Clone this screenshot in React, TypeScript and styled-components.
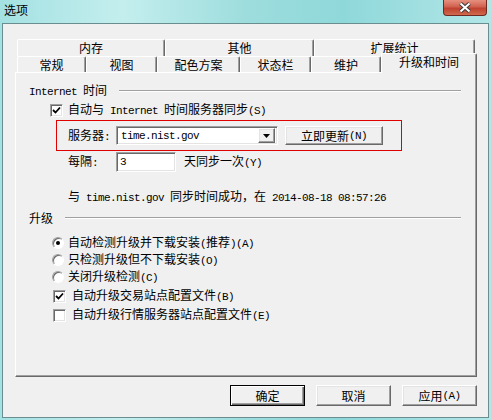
import React from "react";
import styled, { createGlobalStyle, css } from "styled-components";

const GlobalStyle = createGlobalStyle`
  html, body { margin: 0; padding: 0; background: #9fdcdc; }
  body {
    font-family: "Noto Sans CJK SC", "Liberation Sans", sans-serif;
    font-size: 12px;
    line-height: 14px;
    color: #000;
  }
  * { box-sizing: border-box; }
`;

const raised = css`
  border-top: 1px solid #fff;
  border-left: 1px solid #fff;
  border-right: 1px solid #696969;
  border-bottom: 1px solid #696969;
  box-shadow: inset -1px -1px #a0a0a0, inset 1px 1px #e3e3e3;
  background: #f0f0f0;
`;

const sunken = css`
  border-top: 1px solid #a0a0a0;
  border-left: 1px solid #a0a0a0;
  border-right: 1px solid #fff;
  border-bottom: 1px solid #fff;
  box-shadow: inset 1px 1px #696969, inset -1px -1px #e3e3e3;
  background: #fff;
`;

const Window = styled.div`
  width: 491px;
  height: 420px;
  display: flex;
  flex-direction: column;
  padding: 0 2px 2px;
  background: linear-gradient(
    90deg,
    #a4e1e2 0%,
    #c4eeee 25%,
    #9edddd 50%,
    #8fd8da 70%,
    #b2e6e7 100%
  );
`;

const TitleBar = styled.div`
  height: 23px;
  flex: none;
  display: flex;
  justify-content: space-between;
  align-items: flex-start;
  padding-left: 2px;
`;

const Title = styled.span`
  margin-top: 3px;
  color: #000;
`;

const CloseButton = styled.div`
  width: 44px;
  height: 16px;
  margin-right: 2px;
  display: flex;
  align-items: center;
  justify-content: center;
  border: 1px solid #6e2a22;
  border-top: none;
  border-radius: 0 0 4px 4px;
  background: linear-gradient(180deg, #e6907f 0%, #d2614f 45%, #c0412f 55%, #cf6a4e 100%);
`;

const Client = styled.div`
  flex: 1;
  display: flex;
  flex-direction: column;
  background: #f0f0f0;
  border: 1px solid #6a8d90;
  padding: 15px 11px 0 12px;
`;

const TabStrip = styled.div`
  height: 33px;
  flex: none;
  display: flex;
  flex-direction: column;
`;

const TabRow = styled.div<{ $h: number }>`
  height: ${(p) => p.$h}px;
  display: flex;
  align-items: flex-end;
  padding-left: 2px;
`;

const Tab = styled.div<{ $w: number; $h: number; $active?: boolean }>`
  width: ${(p) => p.$w}px;
  height: ${(p) => p.$h}px;
  flex: none;
  display: flex;
  align-items: ${(p) => (p.$active ? "flex-start" : "center")};
  padding-top: ${(p) => (p.$active ? 1 : 0)}px;
  justify-content: center;
  border-top: 1px solid #fff;
  border-left: 1px solid #fff;
  border-right: 1px solid #696969;
  box-shadow: inset -1px 0 #a0a0a0;
  border-radius: 2px 2px 0 0;
  background: #f0f0f0;
  ${(p) =>
    p.$active &&
    css`
      position: relative;
      z-index: 1;
      margin-bottom: -1px;
    `}
`;

const Panel = styled.div`
  height: 305px;
  flex: none;
  display: flex;
  flex-direction: column;
  border-top: 1px solid #fff;
  border-left: 1px solid #fff;
  border-right: 1px solid #696969;
  border-bottom: 1px solid #696969;
  box-shadow: inset -1px -1px #a0a0a0;
  padding: 11px 15px 0 13px;
`;

const GroupHeader = styled.div<{ $mt?: number }>`
  height: 14px;
  margin-top: ${(p) => p.$mt ?? 0}px;
  display: flex;
  align-items: center;
  gap: 12px;
`;

const Etched = styled.div`
  flex: 1;
  height: 2px;
  border-top: 1px solid #a0a0a0;
  border-bottom: 1px solid #fff;
`;

const Row = styled.div<{ $h: number; $mt?: number; $indent: number; $gap?: number }>`
  height: ${(p) => p.$h}px;
  margin-top: ${(p) => p.$mt ?? 0}px;
  padding-left: ${(p) => p.$indent}px;
  display: flex;
  align-items: center;
  gap: ${(p) => p.$gap ?? 0}px;
  white-space: nowrap;
`;

const ServerBox = styled.div`
  width: 346px;
  height: 31px;
  margin: 2px 0 0 27px;
  border: 1px solid #e00000;
  padding-left: 11px;
  display: flex;
  align-items: center;
`;

const FieldLabel = styled.span`
  width: 48px;
  flex: none;
`;

const En = styled.span`
  font-family: "Liberation Mono", monospace;
  font-size: 11px;
  letter-spacing: -0.6px;
  white-space: pre;
`;

const Combo = styled.div`
  width: 162px;
  height: 19px;
  ${sunken}
  display: flex;
  align-items: center;
  justify-content: space-between;
  padding: 2px 2px 2px 4px;
`;

const DropButton = styled.div`
  width: 17px;
  height: 15px;
  ${raised}
  display: flex;
  align-items: center;
  justify-content: center;
`;

const Edit = styled.div`
  width: 60px;
  height: 20px;
  ${sunken}
  display: flex;
  align-items: center;
  padding-left: 3px;
`;

const PushButton = styled.div<{ $w: number; $h: number; $default?: boolean }>`
  width: ${(p) => p.$w}px;
  height: ${(p) => p.$h}px;
  flex: none;
  ${raised}
  display: flex;
  align-items: center;
  justify-content: center;
  ${(p) =>
    p.$default &&
    css`
      border: 1px solid #000;
      box-shadow: inset 1px 1px #fff, inset -1px -1px #696969, inset -2px -2px #a0a0a0;
    `}
`;

const BoxMark = styled.div`
  width: 13px;
  height: 13px;
  flex: none;
  ${sunken}
  display: flex;
  align-items: center;
  justify-content: center;
`;

const RadioMark = styled.div<{ $on?: boolean }>`
  width: 12px;
  height: 12px;
  flex: none;
  border-radius: 50%;
  border: 1px solid;
  border-color: #a0a0a0 #fff #fff #a0a0a0;
  box-shadow: inset 1px 1px #696969;
  background: #fff;
  display: flex;
  align-items: center;
  justify-content: center;
  &::after {
    content: "";
    width: 4px;
    height: 4px;
    border-radius: 50%;
    background: ${(p) => (p.$on ? "#000" : "transparent")};
  }
`;

const ButtonBar = styled.div`
  margin-top: 8px;
  display: flex;
  justify-content: flex-end;
  gap: 11px;
`;

const Check = ({ on }: { on?: boolean }) => (
  <BoxMark>
    {on && (
      <svg width="9" height="9" viewBox="0 0 9 9">
        <path d="M1 4 L3.5 6.5 L8 1.5" fill="none" stroke="#000" strokeWidth="1.8" />
      </svg>
    )}
  </BoxMark>
);

const backTabs = [
  { label: "内存", w: 148 },
  { label: "其他", w: 149 },
  { label: "扩展统计", w: 161 },
];

const frontTabs = [
  { label: "常规", w: 69 },
  { label: "视图", w: 71 },
  { label: "配色方案", w: 83 },
  { label: "状态栏", w: 71 },
  { label: "维护", w: 70 },
  { label: "升级和时间", w: 96, active: true },
];

export default function App() {
  return (
    <>
      <GlobalStyle />
      <Window>
        <TitleBar>
          <Title>选项</Title>
          <CloseButton>
            <svg width="14" height="11" viewBox="0 0 14 11">
              <path d="M2.5 1.5 L11.5 9.5 M11.5 1.5 L2.5 9.5" stroke="#3a3a3a" strokeWidth="4" />
              <path d="M2.5 1.5 L11.5 9.5 M11.5 1.5 L2.5 9.5" stroke="#fff" strokeWidth="2" />
            </svg>
          </CloseButton>
        </TitleBar>

        <Client>
          <TabStrip>
            <TabRow $h={17}>
              {backTabs.map((t) => (
                <Tab key={t.label} $w={t.w} $h={17}>
                  {t.label}
                </Tab>
              ))}
            </TabRow>
            <TabRow $h={16}>
              {frontTabs.map((t) => (
                <Tab key={t.label} $w={t.w} $h={t.active ? 20 : 16} $active={t.active}>
                  {t.label}
                </Tab>
              ))}
            </TabRow>
          </TabStrip>

          <Panel>
            <GroupHeader>
              <span>
                <En>Internet </En>时间
              </span>
              <Etched />
            </GroupHeader>

            <Row $h={16} $mt={4} $indent={21} $gap={5}>
              <Check on />
              <span>
                自动与<En> Internet </En>时间服务器同步<En>(S)</En>
              </span>
            </Row>

            <ServerBox>
              <FieldLabel>
                服务器<En>:</En>
              </FieldLabel>
              <Combo>
                <En>time.nist.gov</En>
                <DropButton>
                  <svg width="7" height="4" viewBox="0 0 7 4">
                    <path d="M0 0 H7 L3.5 4 Z" fill="#000" />
                  </svg>
                </DropButton>
              </Combo>
              <PushButton $w={98} $h={19} style={{ marginLeft: 7 }}>
                立即更新<En>(N)</En>
              </PushButton>
            </ServerBox>

            <Row $h={20} $mt={1} $indent={39}>
              <FieldLabel>
                每隔<En>:</En>
              </FieldLabel>
              <Edit>
                <En>3</En>
              </Edit>
              <span style={{ marginLeft: 8 }}>
                天同步一次<En>(Y)</En>
              </span>
            </Row>

            <Row $h={14} $mt={18} $indent={39}>
              <span>
                与<En> time.nist.gov </En>同步时间成功，在<En> 2014-08-18 08:57:26</En>
              </span>
            </Row>

            <GroupHeader $mt={7}>
              <span>升级</span>
              <Etched />
            </GroupHeader>

            <Row $h={17} $mt={9} $indent={23} $gap={4}>
              <RadioMark $on />
              <span>
                自动检测升级并下载安装<En>(</En>推荐<En>)(A)</En>
              </span>
            </Row>
            <Row $h={17} $indent={23} $gap={4}>
              <RadioMark />
              <span>
                只检测升级但不下载安装<En>(O)</En>
              </span>
            </Row>
            <Row $h={17} $indent={23} $gap={4}>
              <RadioMark />
              <span>
                关闭升级检测<En>(C)</En>
              </span>
            </Row>

            <Row $h={16} $mt={3} $indent={24} $gap={6}>
              <Check on />
              <span>
                自动升级交易站点配置文件<En>(B)</En>
              </span>
            </Row>
            <Row $h={16} $mt={3} $indent={24} $gap={6}>
              <Check />
              <span>
                自动升级行情服务器站点配置文件<En>(E)</En>
              </span>
            </Row>
          </Panel>

          <ButtonBar>
            <PushButton $w={75} $h={21} $default>
              确定
            </PushButton>
            <PushButton $w={75} $h={21}>
              取消
            </PushButton>
            <PushButton $w={75} $h={21}>
              应用<En>(A)</En>
            </PushButton>
          </ButtonBar>
        </Client>
      </Window>
    </>
  );
}
